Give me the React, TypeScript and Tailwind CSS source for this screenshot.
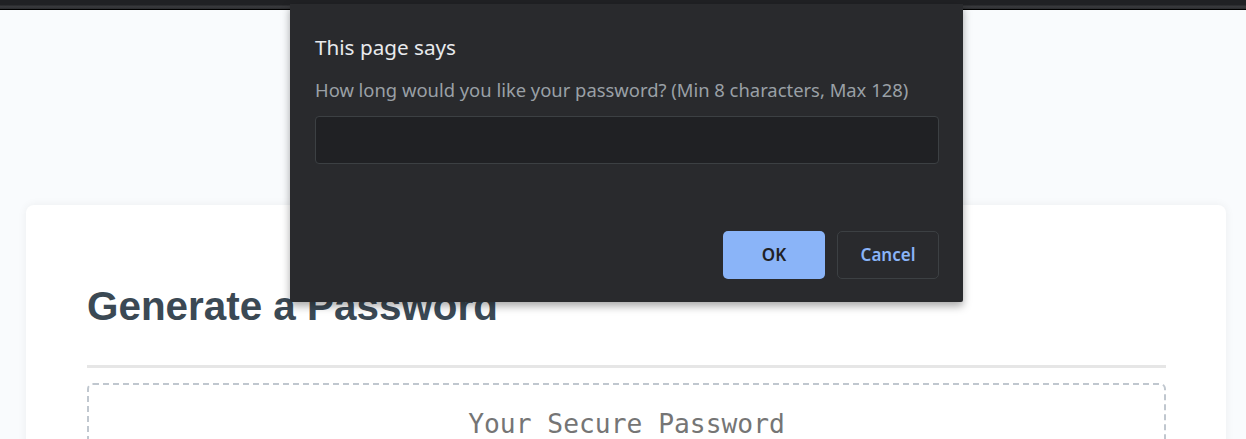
export default function App() {
    return (
        <div className="relative h-[439px] w-full overflow-hidden bg-[#f9fbfd]">
            {/* Browser chrome edge */}
            <div className="h-[10px] w-full border-b border-black bg-[linear-gradient(to_bottom,#202124_0%,#202124_50%,#3a3b3e_75%,#2a2b2e_100%)]" />

            {/* Page */}
            <main className="pl-[26px] pt-[195px]">
                <section className="h-[400px] w-[1200px] rounded-[8px] bg-white pl-[61px] pr-[60px] pt-[77px] shadow-[0_0_10px_rgba(0,0,0,0.06)]">
                    <h2 className="font-['Liberation_Sans',Arial,sans-serif] text-[40.4px] leading-[48px] font-bold text-[#3b4954]">
                        Generate a Password
                    </h2>
                    <hr className="mt-[35px] h-[3px] border-0 bg-[#e6e6e6]" />
                    <div className="mt-[15px] h-[200px] rounded-[6px] border-2 border-dashed border-[#c0c7cf] pt-[23px] text-center font-['DejaVu_Sans_Mono',monospace] text-[26.3px] leading-[32px] text-[#757575]">
                        Your Secure Password
                    </div>
                </section>
            </main>

            {/* Prompt dialog */}
            <div className="absolute left-[290px] top-[4px] flex h-[298px] w-[673px] flex-col rounded-b-[2px] bg-[#292a2d] pb-[23px] pl-[25px] pr-[24px] pt-[30px] font-['Noto_Sans','Open_Sans',sans-serif] shadow-[0_4px_8px_rgba(0,0,0,0.35)]">
                <h1 className="text-[20.7px] leading-[26px] text-[#e8eaed]">This page says</h1>
                <p className="mt-[18px] text-[18.4px] leading-[24px] text-[#9aa0a6]">
                    How long would you like your password? (Min 8 characters, Max 128)
                </p>
                <input
                    type="text"
                    className="mt-[14px] h-[48px] w-[624px] rounded-[4px] border border-[#3c4043] bg-[#202124] px-3 text-[16px] text-[#e8eaed] outline-none"
                />
                <div className="mt-auto flex flex-row justify-end gap-[12px]">
                    <button className="h-[48px] w-[102px] rounded-[5px] bg-[#8ab4f8] text-[17px] font-semibold text-[#202124]">
                        OK
                    </button>
                    <button className="h-[48px] w-[102px] rounded-[5px] border border-[#3c4043] bg-transparent text-[17px] font-semibold text-[#8ab4f8]">
                        Cancel
                    </button>
                </div>
            </div>
        </div>
    );
}
